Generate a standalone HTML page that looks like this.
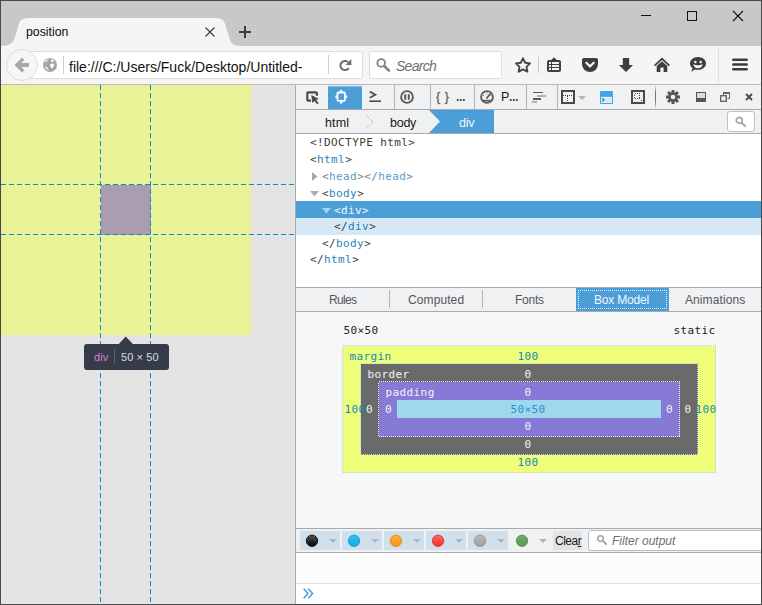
<!DOCTYPE html>
<html>
<head>
<meta charset="utf-8">
<title>position</title>
<style>
*{box-sizing:border-box;margin:0;padding:0}
html,body{width:762px;height:605px;overflow:hidden;background:#c8c8c8}
body{font-family:"Liberation Sans",sans-serif;font-size:12px;color:#1a1a1a;position:relative}
#win{position:absolute;left:0;top:0;width:762px;height:605px;overflow:hidden;background:#c8c8c8}
#win>*{position:absolute}
.t{position:absolute;white-space:pre;line-height:16px;height:16px}
svg{position:absolute;overflow:visible}
/* chrome */
#navbar{left:1px;top:46px;width:760px;height:39px;background:#f5f5f5;border-bottom:1px solid #b9b9b9}
#urlbar{left:20px;top:51px;width:343px;height:28px;background:#fff;border:1px solid #dcdcdc;border-radius:2px}
#searchbar{left:369px;top:51px;width:133px;height:28px;background:#fff;border:1px solid #dedede;border-radius:2px}
#backbtn{left:6px;top:49px;width:32px;height:32px;border-radius:50%;background:#f6f6f6;border:1px solid #dedede}
/* page */
#page{left:1px;top:85px;width:294px;height:519px;background:#e4e4e4;overflow:hidden}
#page>*{position:absolute}
#yellow{left:0;top:0;width:250px;height:250px;background:#e9f396}
#purple{left:100px;top:100px;width:50px;height:50px;background:#ab9db0}
#tip{left:83px;top:259px;width:85px;height:26px;background:#353b48;border-radius:3px}
#splitter{left:295px;top:85px;width:1px;height:519px;background:#a9a9a9}
/* devtools */
#dt{left:296px;top:85px;width:465px;height:519px;background:#fcfcfc;overflow:hidden}
#dt>*{position:absolute}
#tb{left:0;top:0;width:465px;height:25px;background:#f0f1f2;border-bottom:1px solid #aaa}
.sep{position:absolute;top:0;width:1px;height:24px;background:#b4b4b4}
#seltab{left:32px;top:0;width:34px;height:24px;background:linear-gradient(to bottom,#cfe4f5 0,#cfe4f5 1px,#8fc1e8 1px,#8fc1e8 2px,#4c9ed9 2px)}
#bc{left:0;top:25px;width:465px;height:24px;background:#f0f1f2;border-bottom:1px solid #aaa}
#bcsearch{left:431px;top:26px;width:28px;height:21px;background:#fff;border:1px solid #c2c2c2;border-radius:3px}
#markup{left:0;top:49px;width:465px;height:153px;background:#fff}
.mono{font-family:"DejaVu Sans Mono","Liberation Mono",monospace;font-size:11px;letter-spacing:0.4px}
.ml{position:absolute;left:0;width:465px;height:17px;line-height:17px;white-space:pre;color:#3b3b3b}
.ml b{font-weight:normal;color:#2a7fba}
.ml.dim{color:#7b7f85}.ml.dim b{color:#5a9bc9}
#sidetabs{left:0;top:202px;width:465px;height:25px;background:#f0f1f2;border-top:1px solid #aaa;border-bottom:1px solid #aaa}
.stsep{position:absolute;top:3px;width:1px;height:18px;background:#b4b4b4}
#bmtab{left:280px;top:203px;width:93px;height:23px;background:#4c9ed9}
#bmtab i{position:absolute;left:2px;top:2px;right:2px;bottom:2px;border:1px dotted #eaf3fb}
#bm{left:0;top:227px;width:465px;height:216px;background:#f7f7f8}
#ctb{left:0;top:443px;width:465px;height:25px;background:#f0f1f2;border-top:1px solid #aaa;border-bottom:1px solid #aaa}
.fb{position:absolute;top:446px;width:40px;height:19px;background:#cfdfec}
#clearbtn{left:257px;top:446px;width:29px;height:19px;background:#e1e3e6}
#filter{left:292px;top:445px;width:190px;height:21px;background:#fff;border:1px solid #bdbdbd;border-radius:3px}
#cout{left:0;top:468px;width:465px;height:31px;background:#fcfcfc;border-bottom:1px solid #dedede}
#cin{left:0;top:499px;width:465px;height:20px;background:#fff}
.el{display:inline-block;transform:scaleX(0.80);transform-origin:0 50%;width:8px;font-weight:bold;font-size:12px}
.bd{position:absolute;background:#4b4a48}
</style>
</head>
<body>
<div id="win">
  <!-- tab strip -->
  <svg style="left:1px;top:18px" width="240" height="28" viewBox="0 0 240 28"><path d="M0 28 C8 28 12.500 25 14 19 L17 9 C18.500 2 21 0 29 0 L213 0 C221 0 223.500 2 225 9 L228 19 C229.500 25 232 28 240 28 Z" fill="#f5f5f5"/></svg>
  <div class="t" id="t_tab" style="left:26px;top:24px;font-size:12.300px;color:#0c0c0c">position</div>
  <svg style="left:205px;top:27px" width="10" height="10" viewBox="0 0 10 10"><path d="M0.500 0.500 L9.500 9.500 M9.500 0.500 L0.500 9.500" stroke="#3a3a3a" stroke-width="1.100" fill="none"/></svg>
  <svg style="left:239px;top:26px" width="12" height="12" viewBox="0 0 12 12"><path d="M6 0 V12 M0 6 H12" stroke="#3a3a3a" stroke-width="2" fill="none"/></svg>
  <!-- window controls -->
  <svg style="left:641px;top:11px" width="10" height="10" viewBox="0 0 10 10" shape-rendering="crispEdges"><path d="M0 4.500 H10" stroke="#111" stroke-width="1"/></svg>
  <svg style="left:687px;top:11px" width="10" height="10" viewBox="0 0 10 10" shape-rendering="crispEdges"><rect x="0.500" y="0.500" width="9" height="9" stroke="#111" stroke-width="1" fill="none"/></svg>
  <svg style="left:733px;top:11px" width="10" height="10" viewBox="0 0 10 10"><path d="M0 0 L10 10 M10 0 L0 10" stroke="#111" stroke-width="1.100" fill="none"/></svg>

  <!-- nav bar -->
  <div id="navbar"></div>
  <div id="urlbar"></div>
  <div id="backbtn"></div>
  <svg style="left:14px;top:57px" width="16" height="16" viewBox="0 0 16 16"><path d="M0.500 8 L8 0.400 L10.400 2.800 L7.200 6 H15 V10 H7.200 L10.400 13.200 L8 15.600 Z" fill="#a9a9a9"/></svg>
  <svg id="globe" style="left:43px;top:58px" width="14" height="14" viewBox="0 0 14 14"><circle cx="7" cy="7" r="7" fill="#a4a4a4"/><path d="M1.800 4.200 C2.600 2.600 4 1.600 5.600 1.300 C5.200 2.400 4.200 2.600 3.800 3.600 C3.400 4.600 2.400 4 1.800 4.200 Z M7.600 1.200 C9 1.300 10.200 1.900 11.200 2.900 C10.200 3.300 10 4.300 9 4 C8 3.700 8.400 2.600 7.600 1.200 Z M7.200 6.200 C8.200 5.400 9.600 6 10.800 5.600 C11.600 6.400 11 7.600 10.400 8.400 C9.800 9.400 9.600 10.600 8.600 10.400 C7.800 10.200 8.200 9 7.600 8.400 C7 7.800 6.600 6.800 7.200 6.200 Z M2 8.600 C3 8.400 3.800 9 4.400 9.800 C5 10.600 5.800 11 5.600 12.200 C4 11.800 2.600 10.400 2 8.600 Z" fill="#fff"/></svg>
  <div style="left:63px;top:56px;width:1px;height:18px;background:#cdcdcd"></div>
  <div class="t" id="t_url" style="letter-spacing:0px;left:69px;top:59px;font-size:14px;color:#111">file:///C:/Users/Fuck/Desktop/Untitled-</div>
  <div style="left:328px;top:55px;width:1px;height:19px;background:#cdcdcd"></div>
  <svg style="left:338.500px;top:58px" width="14" height="14" viewBox="0 0 14 14"><path d="M9.770 10.140 A4.600 4.600 0 1 1 8.960 3.980" stroke="#6a6a6a" stroke-width="2" fill="none"/><path d="M12.300 1 V7 H6.600 Z" fill="#6a6a6a"/></svg>
  <div id="searchbar"></div>
  <svg style="left:376px;top:58px" width="16" height="16" viewBox="0 0 16 16"><circle cx="5.200" cy="4.900" r="3.800" stroke="#858585" stroke-width="1.900" fill="none"/><path d="M8.300 8 L13 12.700" stroke="#858585" stroke-width="2.600" stroke-linecap="round"/></svg>
  <div class="t" id="t_search" style="letter-spacing:-0.73px;left:396px;top:58px;font-size:14px;color:#6f6f6f;font-style:italic">Search</div>
  <!-- toolbar icons -->
  <svg style="left:515px;top:57px" width="16" height="16" viewBox="0 0 16 16"><path d="M8.000 1.300 L10.175 5.707 L15.038 6.413 L11.519 9.843 L12.350 14.687 L8.000 12.400 L3.650 14.687 L4.481 9.843 L0.962 6.413 L5.825 5.707 Z" stroke="#444" stroke-width="1.900" stroke-linejoin="round" fill="none"/></svg>
  <div style="left:538px;top:57px;width:1px;height:16px;background:#c6c6c6"></div>
  <svg style="left:547px;top:57px" width="14" height="16" viewBox="0 0 14 16"><rect x="0" y="3" width="14" height="12" rx="2" fill="#404040"/><path d="M4 3.200 L7 0.200 L10 3.200 Z" fill="#404040"/><path d="M2 5 H4 V7 H2 Z M5 5 H12 V7 H5 Z M2 8 H4 V10 H2 Z M5 8 H12 V10 H5 Z M2 11 H4 V13 H2 Z M5 11 H12 V13 H5 Z" fill="#f5f5f5"/></svg>
  <svg style="left:582px;top:58px" width="16" height="14" viewBox="0 0 16 14"><path d="M1.600 0 H14.400 Q16 0 16 1.600 V6 A8 8 0 0 1 0 6 V1.600 Q0 0 1.600 0 Z" fill="#3d3d3d"/><path d="M4.300 4.800 L8 8.400 L11.700 4.800" stroke="#f5f5f5" stroke-width="2.200" stroke-linecap="round" stroke-linejoin="round" fill="none"/></svg>
  <svg style="left:619px;top:58px" width="14" height="14" viewBox="0 0 14 14"><path d="M3.800 0 H10.200 V7 H14 L7 14 L0 7 H3.800 Z" fill="#3d3d3d"/></svg>
  <svg style="left:654px;top:57px" width="16" height="15" viewBox="0 0 16 15"><path d="M8 0.500 L16 8 L14.900 9.200 L8 2.900 L1.100 9.200 L0 8 Z" fill="#3d3d3d"/><path d="M8 4.200 L13.300 9 V15 H9.600 V10.500 H6.400 V15 H2.700 V9 Z" fill="#3d3d3d"/></svg>
  <svg style="left:690px;top:57px" width="16" height="15" viewBox="0 0 16 15"><path d="M8 0 C12.500 0 16 2.900 16 6.400 C16 9.900 12.500 12.800 8 12.800 C7 12.800 6 12.650 5.100 12.400 L1.300 14.800 L2.600 11.200 C1 10 0 8.300 0 6.400 C0 2.900 3.500 0 8 0 Z" fill="#3d3d3d"/><circle cx="5.300" cy="4.900" r="1.250" fill="#f5f5f5"/><circle cx="10.700" cy="4.900" r="1.250" fill="#f5f5f5"/><path d="M3.200 7.200 Q8 9.200 12.800 7.200 Q11.800 11.200 8 11.200 Q4.200 11.200 3.200 7.200 Z" fill="#f5f5f5"/></svg>
  <div style="left:718px;top:46px;width:1px;height:38px;background:#e3e3e3"></div>
  <svg style="left:732px;top:58px" width="16" height="13" viewBox="0 0 16 13"><path d="M1.300 1.800 H14.700 M1.300 6.500 H14.700 M1.300 11.200 H14.700" stroke="#3d3d3d" stroke-width="2.600" stroke-linecap="round"/></svg>

  <!-- page viewport -->
  <div id="page">
    <div id="yellow"></div>
    <div id="purple"></div>
    <svg style="left:0;top:0" width="294" height="519" viewBox="0 0 294 519" shape-rendering="crispEdges">
      <g stroke="#0a8bd2" stroke-width="1" stroke-dasharray="5 3" fill="none">
        <path d="M99.500 0 V519 M149.500 0 V519 M0 99.500 H294 M0 149.500 H294"/>
      </g>
    </svg>
    <svg style="left:117px;top:251px" width="16" height="9" viewBox="0 0 16 9"><path d="M0 9 L7.700 0.500 L15.800 9 Z" fill="#353b48"/></svg>
    <div id="tip"></div>
    <div class="t" id="t_tipdiv" style="letter-spacing:0.08px;left:93px;top:264px;font-size:11px;color:#d77fd9">div</div>
    <div style="left:113px;top:264px;width:1px;height:15px;background:#5c626d"></div>
    <div class="t" id="t_tipdim" style="letter-spacing:0.10px;left:120px;top:264px;font-size:11px;color:#d9dde4">50 × 50</div>
  </div>
  <div id="splitter"></div>

  <!-- devtools -->
  <div id="dt">
    <div id="tb"></div>
    <div id="seltab"></div>
    <div class="sep" style="left:98px"></div>
    <div class="sep" style="left:134px"></div>
    <div class="sep" style="left:178px"></div>
    <div class="sep" style="left:230px"></div>
    <div class="sep" style="left:261px"></div>
    <div style="left:359px;top:1px;width:1px;height:22px;background:linear-gradient(to bottom,rgba(90,90,90,0.15),#777 30%,#777 70%,rgba(90,90,90,0.15))"></div>

    <!-- toolbar icons -->
    <svg style="left:10px;top:6px" width="13" height="13" viewBox="0 0 13 13"><path d="M5 9.700 H2.300 Q1.300 9.700 1.300 8.700 V2.300 Q1.300 1.300 2.300 1.300 H9.900 Q10.900 1.300 10.900 2.300 V4.800" stroke="#4a4a45" stroke-width="2.200" fill="none"/><path d="M5.300 4 L13 8 L10.100 8.800 L12.700 12.200 L11.100 13.300 L8.600 9.900 L6.300 12 Z" fill="#4a4a45"/></svg>
    <svg style="left:38px;top:5px" width="14" height="14" viewBox="0 0 14 14"><rect x="3.500" y="2.500" width="7.400" height="8.400" rx="0.800" stroke="#fff" stroke-width="1.800" fill="none"/><path d="M7.200 0 V2 M7.200 11.500 V13.500 M1.400 6.700 H3 M11.400 6.700 H13" stroke="#fff" stroke-width="2.400"/></svg>
    <svg style="left:73px;top:6px" width="12" height="11" viewBox="0 0 12 11"><path d="M0.800 0.600 L6.300 3.700 L0.800 6.800" stroke="#4f4f4b" stroke-width="1.800" fill="none"/><path d="M0.300 10.200 H12" stroke="#4f4f4b" stroke-width="1.700"/></svg>
    <svg style="left:104px;top:5px" width="14" height="14" viewBox="0 0 14 14"><circle cx="7" cy="7" r="5.900" stroke="#5b5b5b" stroke-width="1.900" fill="none"/><path d="M5.200 4.200 V9.800 M8.800 4.200 V9.800" stroke="#5b5b5b" stroke-width="2"/></svg>
    <div class="t" id="t_braces" style="left:140px;top:4px;font-size:12.500px;color:#5f5f5f;letter-spacing:4.500px;-webkit-text-stroke:0.3px #5f5f5f">{}</div>
    <div class="t" id="t_ell1" style="left:160px;top:4px;font-size:12.500px;color:#18191a"><span class="el">…</span></div>
    <svg style="left:184px;top:5px" width="14" height="14" viewBox="0 0 14 14"><circle cx="7" cy="7" r="5.900" stroke="#5b5b5b" stroke-width="1.900" fill="none"/><path d="M7 8 L9.800 4.300" stroke="#5b5b5b" stroke-width="1.800" stroke-linecap="round"/><path d="M3.200 10.600 H10.800" stroke="#5b5b5b" stroke-width="1.600"/><path d="M3.200 5.200 L4 5.800 M7 2.600 V3.600 M10.800 5.200 L10 5.800" stroke="#5b5b5b" stroke-width="1"/></svg>
    <div class="t" id="t_perf" style="left:205px;top:4px;font-size:12.500px;color:#18191a">P<span class="el">…</span></div>
    <svg style="left:236px;top:6px" width="14" height="12" viewBox="0 0 14 12" shape-rendering="crispEdges"><path d="M1 1.500 H11" stroke="#5a5a5a" stroke-width="1.800"/><path d="M5 4.800 H14" stroke="#b2b2b2" stroke-width="1.800"/><path d="M1 8 H9" stroke="#5a5a5a" stroke-width="1.800"/><path d="M0 11.200 H5" stroke="#b2b2b2" stroke-width="1.800"/></svg>
    <svg style="left:265px;top:5px" width="14" height="14" viewBox="0 0 14 14" shape-rendering="crispEdges"><rect x="1" y="1" width="12" height="12" stroke="#4a4a45" stroke-width="2" fill="#f0f1f2"/><path d="M2 5.500 H12" stroke="#4a4a45" stroke-width="1" stroke-dasharray="1 1"/><path d="M6.500 6 V12" stroke="#4a4a45" stroke-width="1" stroke-dasharray="1 1"/></svg>
    <svg style="left:282px;top:11px" width="8" height="4" viewBox="0 0 8 4"><path d="M0 0 H8 L4 4 Z" fill="#b5b5b5"/></svg>
    <svg style="left:304px;top:6px" width="13" height="13" viewBox="0 0 13 13"><rect x="0" y="0" width="13" height="13" rx="1.200" fill="#3ea5e6"/><rect x="1" y="5.800" width="11" height="6.200" fill="#d9ecf8"/><path d="M2 7.200 L4.300 8.900 L2 10.600" stroke="#2b8fd4" stroke-width="1.200" fill="none"/></svg>
    <svg style="left:335px;top:5px" width="14" height="14" viewBox="0 0 14 14" shape-rendering="crispEdges"><rect x="1" y="1" width="12" height="12" stroke="#4a4a45" stroke-width="2" fill="#f0f1f2"/><rect x="3.500" y="3.500" width="5" height="5" stroke="#4a4a45" stroke-width="1" stroke-dasharray="1 1" fill="none"/><path d="M11 9 V11 H9 Z" fill="#4a4a45"/></svg>
    <svg id="gear" style="left:370px;top:5px" width="14" height="14" viewBox="-7 -7 14 14"><g fill="#555"><rect x="-1.500" y="-7" width="3" height="14"/><rect x="-1.500" y="-7" width="3" height="14" transform="rotate(45)"/><rect x="-1.500" y="-7" width="3" height="14" transform="rotate(90)"/><rect x="-1.500" y="-7" width="3" height="14" transform="rotate(135)"/><circle r="4.800"/></g><circle r="2.300" fill="#f0f1f2"/></svg>
    <svg style="left:400px;top:7px" width="10" height="10" viewBox="0 0 10 10" shape-rendering="crispEdges"><rect x="0.500" y="0.500" width="9" height="9" fill="#dcdcdc" stroke="#555" stroke-width="1"/><rect x="0" y="6" width="10" height="4" fill="#555"/></svg>
    <svg style="left:424px;top:7px" width="10" height="10" viewBox="0 0 10 10"><path d="M3.500 3 V1 H9.500 V6.500 H7.500" fill="none" stroke="#666" stroke-width="1"/><rect x="3" y="0" width="7" height="2" fill="#666"/><rect x="0.700" y="3.700" width="5.600" height="5.600" fill="none" stroke="#666" stroke-width="1.400"/></svg>
    <svg style="left:449px;top:8px" width="8" height="8" viewBox="0 0 8 8"><path d="M1 1 L7 7 M7 1 L1 7" stroke="#4a4a4a" stroke-width="1.900"/></svg>
    <div id="bc"></div>
    <svg style="left:133px;top:25px" width="65" height="23" viewBox="0 0 65 23"><path d="M0 0 H65 V23 H0 L11 11.500 Z" fill="#4c9ed9"/></svg>
    <svg style="left:70px;top:30px" width="8" height="14" viewBox="0 0 8 14"><path d="M0.500 0.500 L7 7 L0.500 13.500" stroke="#c3c5c8" stroke-width="1" fill="none"/></svg>
    <div class="t" id="t_html" style="letter-spacing:0.14px;left:29px;top:30px;font-size:12.500px;color:#18191a">html</div>
    <div class="t" id="t_body" style="letter-spacing:-0.25px;left:94px;top:30px;font-size:12.500px;color:#18191a">body</div>
    <div class="t" id="t_div" style="letter-spacing:-0.19px;left:163px;top:30px;font-size:12.500px;color:#f5f7fa">div</div>
    <div id="bcsearch"></div>
    <svg style="left:439px;top:31px" width="12" height="12" viewBox="0 0 12 12"><circle cx="4.300" cy="4.300" r="3" stroke="#a9a9a9" stroke-width="1.700" fill="none"/><path d="M6.600 6.600 L10.300 10.300" stroke="#a9a9a9" stroke-width="2" stroke-linecap="round"/></svg>

    <div id="markup" class="mono">
      <div style="position:absolute;left:0;top:67px;width:465px;height:17px;background:#4c9ed9"></div>
      <div style="position:absolute;left:0;top:84px;width:465px;height:17px;background:#d6e8f5"></div>
      <div class="ml" style="top:0px;left:14px">&lt;!DOCTYPE html&gt;</div>
      <div class="ml" style="top:17px;left:14px">&lt;<b>html</b>&gt;</div>
      <div class="ml dim" style="top:34px;left:26px">&lt;<b>head</b>&gt;&lt;/<b>head</b>&gt;</div>
      <div class="ml" style="top:51px;left:26px">&lt;<b>body</b>&gt;</div>
      <div class="ml" style="top:68px;left:38px;color:#f5f7fa">&lt;<b style="color:#f5f7fa">div</b>&gt;</div>
      <div class="ml" style="top:84px;left:38px">&lt;/<b>div</b>&gt;</div>
      <div class="ml" style="top:101px;left:26px">&lt;/<b>body</b>&gt;</div>
      <div class="ml" style="top:117px;left:14px">&lt;/<b>html</b>&gt;</div>
      <svg style="left:16px;top:38px" width="6" height="9" viewBox="0 0 6 9"><path d="M0 0 L5.500 4.500 L0 9 Z" fill="#a8a8a8"/></svg>
      <svg style="left:14px;top:57px" width="9" height="6" viewBox="0 0 9 6"><path d="M0 0 H9 L4.500 5.500 Z" fill="#adadad"/></svg>
      <svg style="left:26px;top:74px" width="9" height="6" viewBox="0 0 9 6"><path d="M0 0 H9 L4.500 5.500 Z" fill="#a7d0ee"/></svg>
    </div>

    <div id="sidetabs"></div>
    <div class="stsep" style="left:93px;top:205px"></div>
    <div class="stsep" style="left:186px;top:205px"></div>
    <div id="bmtab"><i></i></div>
    <div class="t" id="t_rules" style="letter-spacing:-0.66px;left:33px;top:207px;color:#55565c">Rules</div>
    <div class="t" id="t_computed" style="letter-spacing:0.10px;left:112px;top:207px;color:#55565c">Computed</div>
    <div class="t" id="t_fonts" style="letter-spacing:-0.24px;left:219px;top:207px;color:#55565c">Fonts</div>
    <div class="t" id="t_boxmodel" style="letter-spacing:-0.18px;left:298px;top:207px;color:#f5f7fa">Box Model</div>
    <div class="t" id="t_anim" style="letter-spacing:0.09px;left:389px;top:207px;color:#55565c">Animations</div>

    <div id="bm"></div>

    <svg id="bmsvg" class="mono" style="left:0;top:227px" width="465" height="216" viewBox="296 312 465 216">
      <rect x="342.500" y="345.500" width="373" height="127" fill="#effe78" stroke="#a9cdf0" stroke-width="1" stroke-dasharray="1 1" shape-rendering="crispEdges"/>
      <rect x="360.500" y="363.500" width="337" height="91" fill="#6a6a6a" stroke="#b4d6f4" stroke-width="1" stroke-dasharray="1 1" shape-rendering="crispEdges"/>
      <rect x="378.500" y="381.500" width="301" height="55" fill="#8779d6" stroke="#f2f2f8" stroke-width="1" stroke-dasharray="1 1" shape-rendering="crispEdges"/>
      <rect x="397" y="400" width="264" height="18" fill="#9fd8ed" shape-rendering="crispEdges"/>
      <g font-size="11" fill="#222">
        <text x="343.500" y="334">50×50</text>
        <text x="673.500" y="334">static</text>
      </g>
      <g font-size="11">
        <text x="349.500" y="360" fill="#0f89bd">margin</text>
        <text x="367.500" y="378" fill="#f2f2f2">border</text>
        <text x="385.500" y="396" fill="#f4f2fb">padding</text>
        <g text-anchor="middle">
          <text x="528" y="360" fill="#0f89bd">100</text>
          <text x="528" y="378" fill="#f2f2f2">0</text>
          <text x="528" y="396" fill="#f4f2fb">0</text>
          <text x="528" y="413" fill="#2a8fcb">50×50</text>
          <text x="528" y="430" fill="#f4f2fb">0</text>
          <text x="528" y="448" fill="#f2f2f2">0</text>
          <text x="528" y="466" fill="#0f89bd">100</text>
        </g>
        <text x="344.500" y="413" fill="#0f89bd">100</text>
        <text x="366" y="413" fill="#f2f2f2">0</text>
        <text x="385" y="413" fill="#f4f2fb">0</text>
        <text x="666" y="413" fill="#f4f2fb">0</text>
        <text x="684.500" y="413" fill="#f2f2f2">0</text>
        <text x="695.500" y="413" fill="#0f89bd">100</text>
      </g>
    </svg>

    <div id="ctb"></div>
    <div class="fb" style="left:4px"></div>
    <div class="fb" style="left:46px"></div>
    <div class="fb" style="left:88px"></div>
    <div class="fb" style="left:130px"></div>
    <div class="fb" style="left:172px"></div>
    <div id="clearbtn"></div>
    <div id="filter"></div>
    <svg style="left:0;top:443px" width="465" height="25" viewBox="296 528 465 25"><defs><linearGradient id="g312" x1="0" y1="0" x2="0" y2="1"><stop offset="0" stop-color="#555"/><stop offset="1" stop-color="#000"/></linearGradient><linearGradient id="g354" x1="0" y1="0" x2="0" y2="1"><stop offset="0" stop-color="#2cc3f7"/><stop offset="1" stop-color="#12a9e4"/></linearGradient><linearGradient id="g396" x1="0" y1="0" x2="0" y2="1"><stop offset="0" stop-color="#ffb23a"/><stop offset="1" stop-color="#f7931a"/></linearGradient><linearGradient id="g438" x1="0" y1="0" x2="0" y2="1"><stop offset="0" stop-color="#ff6a6a"/><stop offset="1" stop-color="#f22f2f"/></linearGradient><linearGradient id="g480" x1="0" y1="0" x2="0" y2="1"><stop offset="0" stop-color="#b9b9b9"/><stop offset="1" stop-color="#9f9f9f"/></linearGradient><linearGradient id="g522" x1="0" y1="0" x2="0" y2="1"><stop offset="0" stop-color="#72ac6c"/><stop offset="1" stop-color="#579a52"/></linearGradient></defs><circle cx="312" cy="540.800" r="5.700" fill="url(#g312)" stroke="#000" stroke-width="0.800"/><circle cx="354" cy="540.800" r="5.700" fill="url(#g354)" stroke="#1592c4" stroke-width="0.800"/><circle cx="396" cy="540.800" r="5.700" fill="url(#g396)" stroke="#dd8310" stroke-width="0.800"/><circle cx="438" cy="540.800" r="5.700" fill="url(#g438)" stroke="#d72828" stroke-width="0.800"/><circle cx="480" cy="540.800" r="5.700" fill="url(#g480)" stroke="#8b8b8b" stroke-width="0.800"/><circle cx="522" cy="540.800" r="5.700" fill="url(#g522)" stroke="#4c8947" stroke-width="0.800"/><path d="M329 539 H337 L333 543 Z" fill="#b0b3b8"/><path d="M371 539 H379 L375 543 Z" fill="#b0b3b8"/><path d="M413 539 H421 L417 543 Z" fill="#b0b3b8"/><path d="M455 539 H463 L459 543 Z" fill="#b0b3b8"/><path d="M497 539 H505 L501 543 Z" fill="#b0b3b8"/><path d="M539 539 H547 L543 543 Z" fill="#b0b3b8"/><circle cx="600.500" cy="538.500" r="2.800" stroke="#a4a4a4" stroke-width="1.500" fill="none"/><path d="M602.700 540.700 L606 544" stroke="#a4a4a4" stroke-width="1.900" stroke-linecap="round"/></svg>
    <div class="t" id="t_clear" style="letter-spacing:-0.48px;left:259px;top:448px;color:#18191a">Clea<u>r</u></div>
    <div class="t" id="t_filter" style="left:316px;top:448px;color:#6f6f6f;font-style:italic">Filter output</div>
    <div id="cout"></div>
    <div id="cin"></div>
    <svg style="left:7px;top:503px" width="11" height="11" viewBox="0 0 11 11"><path d="M0.700 0.700 L5 5.500 L0.700 10.300 M5.300 0.700 L9.600 5.500 L5.300 10.300" stroke="#2b95e0" stroke-width="1.300" fill="none"/></svg>
  </div>

  <!-- window border -->
  <div class="bd" style="left:0;top:0;width:762px;height:1px"></div>
  <div class="bd" style="left:0;top:604px;width:762px;height:1px"></div>
  <div class="bd" style="left:0;top:0;width:1px;height:605px"></div>
  <div class="bd" style="left:761px;top:0;width:1px;height:605px"></div>
</div>
</body>
</html>
